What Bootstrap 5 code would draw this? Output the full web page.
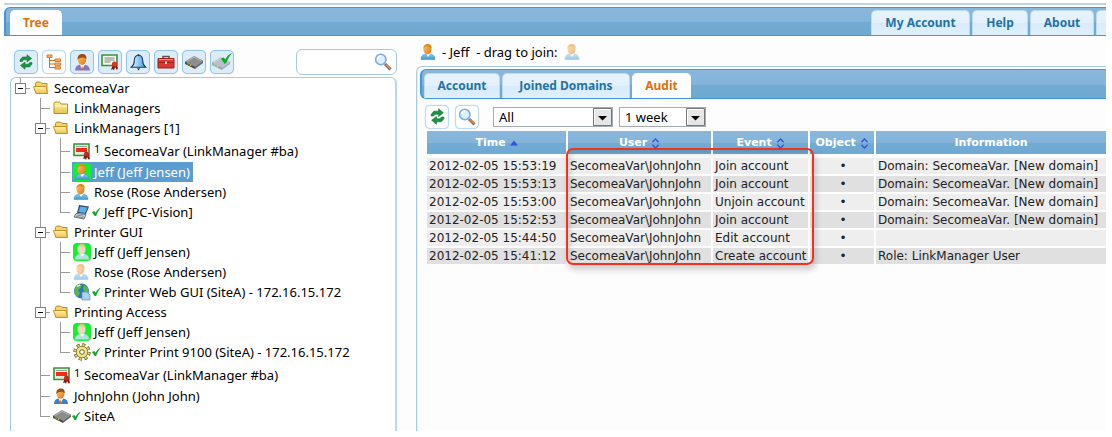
<!DOCTYPE html>
<html lang="en">
<head>
<meta charset="utf-8">
<meta name="viewport" content="width=device-width, initial-scale=1">
<title>GateManager</title>
<link href="https://cdn.jsdelivr.net/npm/bootstrap@5.3.0/dist/css/bootstrap.min.css" rel="stylesheet">
<style>
body{background:#fff;color:#000;font:13px/20px "Noto Sans","Open Sans",sans-serif;padding:3px 6px 6px 4px}
.frame{background:#fdfdfd;border-top:2px solid #bfd5e7;padding-top:2px}
.tabbar{height:30px;border:1px solid #4297d7;border-right:0;border-left-width:2px;border-radius:6px 0 0 6px;background:linear-gradient(#8ab7dc 0,#84b4da 52%,#72aad3 53%,#6faad2 100%)}
.tabbar.main-bar{height:29px;border-radius:6px 0 0 0}
.tabbar a{display:flex;align-items:center;justify-content:center;height:25px;border:1px solid #b9dbf3;border-bottom:0;border-radius:5px 5px 0 0;background:linear-gradient(#e7f3fd 0,#e3f1fc 50%,#d8ebfa 51%,#dfeffc 100%);color:#2272a5;font-weight:700;font-size:12px;line-height:16px;text-decoration:none;white-space:nowrap}
.tabbar a.active{background:#fcfdfe;border-color:#fcfdfe;color:#e17009}
.topnav,.work .tabbar{gap:2px}
.w-tree{width:52px}
.w-account{width:99px}
.w-help{width:56px}
.w-about{width:64px}
.tabbar a.w-more{width:10px;border-right:0;border-radius:5px 0 0 0}
.w-acct{width:76px}
.w-joined{width:128px}
.w-audit{width:59px}
.side{width:393px;flex:none;padding-left:6px}
.toolbar{height:41px;padding:11px 0 0 4px}
.icobtn{width:24px;height:24px;padding:0;border:1px solid #92c7ea;border-radius:5px;background:#dcecf9;display:flex;align-items:center;justify-content:center;box-shadow:0 0 1px #a8d2ee}
.icobtn.plain{background:#fff;border-color:#b9dbf3}
.finder{width:101px;height:26px;border:1px solid #a6cbe6;border-radius:6px;background:#fff}
.finder input{border:0;outline:0;background:transparent;min-width:0;font-size:13px}
.treebox{border:1px solid #a6cbe6;border-bottom:0;border-right:2px solid #b9d7ec;border-radius:6px 6px 0 0;background:#fff}
.tree,.tree ul{list-style:none;margin:0;padding:0}
.tree ul{padding-left:20px}
.tree li{position:relative}
.tree ul>li::before{content:"";position:absolute;left:9px;top:0;bottom:0;width:1px;background:#9a9a9a}
.tree ul>li:last-child::before{bottom:auto;height:11px}
.node{display:flex;align-items:center;height:20px;padding-left:21px;position:relative;white-space:nowrap}
.lic>.node{height:24px;padding-top:2px}
.tree ul>li>.node::before{content:"";position:absolute;left:10px;top:10px;width:9px;height:1px;background:#9a9a9a}
.tree ul>li.lic>.node::before{top:13px}
.toggle{position:absolute;left:4px;top:5px;width:11px;height:11px;border:1px solid #808080;background:#fff;padding:0}
.toggle::before{content:"";position:absolute;left:2px;right:2px;top:4px;height:1px;background:#000}
.root>.node::before{content:"";position:absolute;left:15px;top:10px;width:4px;height:1px;background:#9a9a9a}
.root>.node::after{content:"";position:absolute;left:9px;top:0;width:1px;height:5px;background:#9a9a9a}
.node>a{display:flex;align-items:center;color:inherit;text-decoration:none;line-height:20px;height:20px;padding:0 3px 0 1px}
.node svg{flex:none}
.pic{width:21px;display:inline-flex;align-items:center}
.mini{width:10px;height:20px;font-size:11px;line-height:16px}
.tick{width:9px;margin-left:-2px;margin-right:3px}
.node>a.selected{background:#5b9dd0;color:#fff}
.online{background:#0cf42a;border-radius:4px}
.faded{opacity:.5}
.content{padding-left:19px;min-width:0}
.whoami{height:30px;padding:2px 0 0 4px;gap:6px}
.work{border:1px solid #a6cbe6;border-width:1px 0 0 1px;border-radius:6px 0 0 0;box-shadow:inset 1px 0 0 #e3f0f9;min-width:0;padding:2px 0 0 3px}
.work .tabbar{padding-left:2px}
.filters{gap:6px;padding:5px 0 0 5px;height:30px}
.pick{appearance:none;height:20px;border:1px solid #a5acb2;border-radius:0;padding:0 22px 0 5px;line-height:18px;color:#000;background:#fff url("data:image/svg+xml,%3Csvg xmlns='http://www.w3.org/2000/svg' width='19' height='18'%3E%3Cpath d='M.5.5h18v17H.5z' fill='%23e6e6e6' stroke='%23777'/%3E%3Cpath d='M1.500 16V1.500H17' fill='none' stroke='%23fff'/%3E%3Cpath d='M5 8h9L9.500 12.500z'/%3E%3C/svg%3E") no-repeat right center}
.type-pick{width:120px;margin-left:8px}
.span-pick{width:87px}
.logwrap{padding-left:5px;margin-right:-2px}
.log{width:100%;table-layout:fixed;border-collapse:separate;border-spacing:2px;font:12px/16px "DejaVu Sans",sans-serif;color:#222;margin:0}
.log th{height:23px;padding:0;text-align:center;font-size:11px;line-height:23px;color:#fff;background:linear-gradient(#8ab7dc 0,#84b4da 52%,#72aad3 53%,#6faad2 100%);white-space:nowrap}
.log td{height:16px;padding:0 0 0 2px;white-space:nowrap;overflow:hidden;background:#eee}
.log tbody tr:nth-child(odd) td{background:#e0e0e0}
.log tbody tr.gap-row td{height:0;background:none}
.c1{width:139px}
.c2{width:143px}
.c3{width:95px}
.c4{width:64px}
.callout{position:absolute;left:146px;top:19px;width:248px;height:117px;border:2px solid #ee3322;border-radius:7px;box-shadow:2px 5px 6px rgba(0,0,0,.18),inset 3px 4px 5px rgba(0,0,0,.12);pointer-events:none}
.page-wrap{overflow-x:hidden}
</style>
</head>
<body class="page-wrap d-flex flex-column min-vh-100">
<svg width="0" height="0" class="position-absolute" aria-hidden="true">
  <defs>
    <linearGradient id="gold" x2="0" y2="1"><stop stop-color="#fff3a8"/><stop offset="1" stop-color="#ecc24a"/></linearGradient>
    <linearGradient id="face" x2="1" y2="1"><stop stop-color="#ffc777"/><stop offset="1" stop-color="#d97708"/></linearGradient>
    <linearGradient id="coat" x2="0" y2="1"><stop stop-color="#8ccbee"/><stop offset="1" stop-color="#3b97cf"/></linearGradient>
    <linearGradient id="bellfill"><stop stop-color="#e8f6ff"/><stop offset="1" stop-color="#3d9be4"/></linearGradient>
  </defs>
  <symbol id="refresh" viewBox="0 0 16 16"><path d="M2 7.500V6l2.500-3H9V.7l4.500 3.800L9 8V5.800H5.500L4.300 7.500z" fill="#1b9544" stroke="#0c7430" stroke-width=".6"/><path d="M14 8.500V10l-2.500 3H7v2.300l-4.500-3.800L7 8v2.200h3.500l1.200-1.700z" fill="#1b9544" stroke="#0c7430" stroke-width=".6"/></symbol>
  <symbol id="hier" viewBox="0 0 16 16"><path d="M3.500 3v10.500H9M3.500 6.500H9M3.500 10H9" fill="none" stroke="#c9711c"/><g fill="#f9b367" stroke="#d77a22"><path d="M1 1h5v2.500H1z"/><path d="M9 5h5.500v2.500H9zM9 9h5.500v2.300H9zM9 12.800h5.500V15H9z"/></g></symbol>
  <symbol id="user" viewBox="0 0 16 16"><path d="M1 15.500c0-3 1.500-5 4-5.500h5.500c3 .5 4.500 2.500 4.500 5.500z" fill="url(#coat)" stroke="#3c8fc2" stroke-width=".5"/><path d="M6 9.500 8 13l2.500-3.500z" fill="#fff"/><ellipse cx="7.500" cy="5.500" rx="4" ry="5" fill="url(#face)"/><path d="M3.400 5C3.200 1.500 5.200 0 8 0c2.500 0 4 1.500 3.600 4.500C10 2.500 6 2.200 4.500 3z" fill="#dd8b16"/></symbol>
  <symbol id="away" viewBox="0 0 16 16"><path d="M1 15.500c0-3 1.500-5 4-5.500h5.500c3 .5 4.500 2.500 4.500 5.500z" fill="#b5e0dc" stroke="#8cc9b8" stroke-width=".5"/><path d="M6 9.500 8 13l2.500-3.500z" fill="#fff"/><ellipse cx="7.500" cy="5.500" rx="4" ry="5" fill="#ead9bd"/><path d="M3.400 5C3.200 1.500 5.200 0 8 0c2.500 0 4 1.500 3.600 4.500C10 2.500 6 2.200 4.500 3z" fill="#d6c49c"/></symbol>
  <symbol id="admin" viewBox="0 0 16 16"><path d="M1 15.500c0-3 1.500-5 4-5.500h5.500c3 .5 4.500 2.500 4.500 5.500z" fill="currentColor"/><path d="M5.500 9.500 7.500 15l3-5.500z" fill="#fff"/><path d="m7.500 11 1.500 4H6.500z" fill="#e06a2a"/><ellipse cx="7.500" cy="5.500" rx="3.900" ry="4.800" fill="url(#face)"/><path d="M3.400 5.500C3 1.500 5.200 0 8 0c2.700 0 4.200 2 3.600 5C10 2.700 6 2.500 3.400 5.500z" fill="#9a4c12"/></symbol>
  <symbol id="cert" viewBox="0 0 18 17"><path d="M1 1h15v10.500H1z" fill="#f5faf0" stroke="#37913f" stroke-width="1.600"/><path d="M3.500 4h10M3.500 6h10M3.500 8h6" stroke="#78857a"/><path d="m12 10-2 6 2-1 1 1.500 1-3.500 2 3 1-2-2-4z" fill="#7e1510"/><circle cx="13.500" cy="10" r="2.600" fill="#e33224"/></symbol>
  <symbol id="license" viewBox="0 0 18 17"><path d="M1 1h15v11.500H1z" fill="#e3efdc" stroke="#37913f" stroke-width="1.600"/><path d="M3 5h11v4H3z" fill="#f5291a"/><path d="M3 3.500h11" stroke="#9aab98"/><path d="m12 11-2 5 2-.5 1 1.500 1-3 2 3 1-2-2-4z" fill="#7e1510"/><circle cx="13.500" cy="11" r="2.500" fill="#c9281c"/></symbol>
  <symbol id="bell" viewBox="0 0 16 16"><path d="M8 1c-3 .5-4 2.500-4 5.500 0 3-1 4.500-2.800 6h13.600C13 11 12 9.500 12 6.500 12 3.500 11 1.500 8 1z" fill="url(#bellfill)" stroke="#173a63"/><path d="M6.500 13.500h3L8 15.500z" fill="#173a63"/><circle cx="8" cy="1.200" r="1" fill="#173a63"/></symbol>
  <symbol id="toolbox" viewBox="0 0 18 16"><path d="M6 5V2.500h6V5" fill="none" stroke="#555" stroke-width="1.500"/><path d="M1 4.500h16V14H1z" fill="#d83a32" stroke="#a51d17"/><path d="M1 8h16v1H1z" fill="#a8211b"/><path d="M2 5.500h14" stroke="#f29a90"/><path d="M8 7.500h2V10H8z" fill="#ddd"/></symbol>
  <symbol id="gate" viewBox="0 0 18 16"><path d="M0 7.500 9 2l9 4.500-8 6z" fill="#8d8d8d"/><path d="M0 7.500V10l10 5v-2.500z" fill="#4b4b4b"/><path d="m18 6.500-8 6V15l8-6z" fill="#6b6b6b"/><path d="M2 7.500 9 3.200l7 3.500" fill="none" stroke="#b5b5b5"/><circle cx="3" cy="9.800" r=".9" fill="#3dce45"/><circle cx="5.500" cy="11" r=".9" fill="#f3a81b"/></symbol>
  <symbol id="check" viewBox="0 0 10 10"><path d="M0 5 2.500 4 4 5.800C5 3.500 7 1.200 10 0 7.500 3 5.800 6 4.600 9.500H3z" fill="#10a52b"/></symbol>
  <symbol id="lens" viewBox="0 0 18 18"><path d="m11 11 5.500 5.500" stroke="#6a6a8a" stroke-width="3"/><path d="m12 11.500 4.500 4" stroke="#e08a3c" stroke-width="2"/><circle cx="6.800" cy="6.500" r="5.200" fill="#dcf0ff" stroke="#7daee0" stroke-width="1.600"/><path d="M3.500 6A3.500 3.500 0 0 1 7 3" fill="none" stroke="#fff" stroke-width="1.300"/></symbol>
  <symbol id="folder" viewBox="0 0 16 16"><path d="M1 13.500v-10L2 2h4.500L8 4h6.500v9.500z" fill="url(#gold)" stroke="#b98f26"/><path d="M1.500 6H14" stroke="#fffbd8"/></symbol>
  <symbol id="folder-open" viewBox="0 0 16 16"><path d="M2.500 13V3.500L3.500 2h4L9 3.500h5V13z" fill="#f3d36c" stroke="#b98f26"/><path d="M.5 6.500H13L14.500 13.500H3z" fill="url(#gold)" stroke="#c09428"/></symbol>
  <symbol id="laptop" viewBox="0 0 17 16"><path d="m6 1 10 1.500L13 10 4 9z" fill="#2e4b68"/><path d="m7 2.500 7.500 1L12.200 9 5.500 8z" fill="#58aef0"/><path d="m3 9.500 10 1-2 4.500-10-2z" fill="#d7dce2" stroke="#67717b"/><path d="m3.500 11 7.500 1.200M3 12.500l7.500 1.300" stroke="#68737e" stroke-width=".8"/></symbol>
  <symbol id="globe" viewBox="0 0 18 18"><circle cx="8.500" cy="8" r="7.500" fill="#2f76b5"/><path d="M2 4.500C5 .5 8 1 9 2L7.500 5 5 7l2 3-2 4C2 12 .8 8 2 4.500zM11 2l4 3 .5 4-4 .5-1.500-4z" fill="#5cb747"/><path d="M4 3.500 7 2" stroke="#d8f4df" stroke-width="1.500"/><path d="M9 9h5l3 3v5H9z" fill="#a8d4f0" stroke="#5f91b9" stroke-width=".7"/></symbol>
  <symbol id="gear" viewBox="0 0 18 18"><circle cx="9" cy="9" r="7" fill="none" stroke="#5c5216" stroke-width="3.400" stroke-dasharray="3 2.498"/><circle cx="9" cy="9" r="5.800" fill="#efe48a" stroke="#6f6522" stroke-width=".8"/><circle cx="9" cy="9" r="7" fill="none" stroke="#e6da7c" stroke-width="2" stroke-dasharray="2 3.498" stroke-dashoffset="-.5"/><circle cx="9" cy="9" r="2.300" fill="#fff" stroke="#6f6522"/></symbol>
  <symbol id="sort" viewBox="0 0 10 12"><path d="M1.500 4.500 5 1l3.500 3.500M1.500 7.500 5 11l3.500-3.500" fill="none" stroke="#3251e6" stroke-width="1.500"/></symbol>
</svg>

<div class="frame flex-grow-1 d-flex flex-column">
  <nav class="tabbar main-bar d-flex align-items-end overflow-hidden">
    <a class="w-tree active ms-1" href="#" aria-current="page">Tree</a>
    <div class="d-flex ms-auto topnav">
      <a href="#" class="w-account">My Account</a><a href="#" class="w-help">Help</a><a href="#" class="w-about">About</a><a href="#" class="w-more" aria-label="More"></a>
    </div>
  </nav>

  <div class="d-flex flex-grow-1">
    <aside class="side d-flex flex-column">
      <div class="d-flex align-items-center justify-content-between toolbar">
        <div class="d-flex gap-1">
          <button class="icobtn" type="button" aria-label="Refresh"><svg width="16" height="16"><use href="#refresh"/></svg></button>
          <button class="icobtn plain" type="button" aria-label="Tree view"><svg width="16" height="16"><use href="#hier"/></svg></button>
          <button class="icobtn" type="button" aria-label="Accounts"><svg width="17" height="17" color="#8a72c4"><use href="#admin"/></svg></button>
          <button class="icobtn" type="button" aria-label="Licenses"><svg width="18" height="17"><use href="#cert"/></svg></button>
          <button class="icobtn" type="button" aria-label="Alerts"><svg width="17" height="17"><use href="#bell"/></svg></button>
          <button class="icobtn" type="button" aria-label="Tools"><svg width="18" height="16"><use href="#toolbox"/></svg></button>
          <button class="icobtn" type="button" aria-label="Appliances"><svg width="18" height="16"><use href="#gate"/></svg></button>
          <button class="icobtn" type="button" aria-label="Online appliances"><svg width="20" height="18"><use href="#gate" y="2" width="18" height="16" opacity=".45"/><use href="#check" x="9" width="11" height="11"/></svg></button>
        </div>
        <div class="finder d-flex align-items-center pe-1"><input type="text" class="flex-grow-1 w-100" aria-label="Search tree"><svg width="18" height="18" class="flex-shrink-0"><use href="#lens"/></svg></div>
      </div>
      <div class="treebox flex-grow-1">
        <ul class="tree">
          <li class="root"><div class="node"><button class="toggle" type="button" aria-label="Collapse"></button><a href="#"><span class="pic"><svg width="16" height="16"><use href="#folder-open"/></svg></span>SecomeaVar</a></div>
            <ul>
              <li><div class="node"><a href="#"><span class="pic"><svg width="16" height="16"><use href="#folder"/></svg></span>LinkManagers</a></div></li>
              <li><div class="node"><button class="toggle" type="button" aria-label="Collapse"></button><a href="#"><span class="pic"><svg width="16" height="16"><use href="#folder-open"/></svg></span>LinkManagers [1]</a></div>
                <ul>
                  <li class="lic"><div class="node"><a href="#"><span class="pic"><svg width="18" height="17"><use href="#license"/></svg></span><span class="mini">1</span>SecomeaVar (LinkManager #ba)</a></div></li>
                  <li><div class="node"><a href="#" class="selected"><span class="pic"><svg class="online" width="18" height="18"><use href="#user" x="1" y="1" width="16" height="16"/></svg></span>Jeff (Jeff Jensen)</a></div></li>
                  <li><div class="node"><a href="#"><span class="pic"><svg width="16" height="16"><use href="#user"/></svg></span>Rose (Rose Andersen)</a></div></li>
                  <li><div class="node"><a href="#"><span class="pic"><svg width="17" height="16"><use href="#laptop"/></svg></span><svg class="tick" height="10"><use href="#check"/></svg>Jeff [PC-Vision]</a></div></li>
                </ul>
              </li>
              <li><div class="node"><button class="toggle" type="button" aria-label="Collapse"></button><a href="#"><span class="pic"><svg width="16" height="16"><use href="#folder-open"/></svg></span>Printer GUI</a></div>
                <ul>
                  <li><div class="node"><a href="#"><span class="pic"><svg class="online" width="18" height="18"><use href="#away" x="1" y="1" width="16" height="16"/></svg></span>Jeff (Jeff Jensen)</a></div></li>
                  <li><div class="node"><a href="#"><span class="pic"><svg class="faded" width="16" height="16"><use href="#user"/></svg></span>Rose (Rose Andersen)</a></div></li>
                  <li><div class="node"><a href="#"><span class="pic"><svg width="18" height="18"><use href="#globe"/></svg></span><svg class="tick" height="10"><use href="#check"/></svg>Printer Web GUI (SiteA) - 172.16.15.172</a></div></li>
                </ul>
              </li>
              <li><div class="node"><button class="toggle" type="button" aria-label="Collapse"></button><a href="#"><span class="pic"><svg width="16" height="16"><use href="#folder-open"/></svg></span>Printing Access</a></div>
                <ul>
                  <li><div class="node"><a href="#"><span class="pic"><svg class="online" width="18" height="18"><use href="#away" x="1" y="1" width="16" height="16"/></svg></span>Jeff (Jeff Jensen)</a></div></li>
                  <li><div class="node"><a href="#"><span class="pic"><svg width="18" height="18"><use href="#gear"/></svg></span><svg class="tick" height="10"><use href="#check"/></svg>Printer Print 9100 (SiteA) - 172.16.15.172</a></div></li>
                </ul>
              </li>
              <li class="lic"><div class="node"><a href="#"><span class="pic"><svg width="18" height="17"><use href="#license"/></svg></span><span class="mini">1</span>SecomeaVar (LinkManager #ba)</a></div></li>
              <li><div class="node"><a href="#"><span class="pic"><svg width="16" height="17" color="#3f7fc4"><use href="#admin"/></svg></span>JohnJohn (John John)</a></div></li>
              <li><div class="node"><a href="#"><span class="pic"><svg width="18" height="16"><use href="#gate"/></svg></span><svg class="tick" height="10"><use href="#check"/></svg>SiteA</a></div></li>
            </ul>
          </li>
        </ul>
      </div>
    </aside>

    <main class="flex-grow-1 d-flex flex-column content">
      <div class="d-flex align-items-center whoami"><svg width="16" height="18"><use href="#user"/></svg><span>- Jeff &nbsp;- drag to join:</span><svg class="faded" width="16" height="18"><use href="#user"/></svg></div>
      <section class="work flex-grow-1">
        <nav class="tabbar d-flex align-items-end">
          <a href="#" class="w-acct">Account</a><a href="#" class="w-joined">Joined Domains</a><a href="#" class="w-audit active" aria-current="page">Audit</a>
        </nav>
        <form class="d-flex align-items-center filters">
          <button class="icobtn plain" type="button" aria-label="Refresh log"><svg width="17" height="17"><use href="#refresh"/></svg></button>
          <button class="icobtn plain" type="button" aria-label="Search log"><svg width="18" height="18"><use href="#lens"/></svg></button>
          <select class="pick type-pick" aria-label="Event type"><option>All</option></select>
          <select class="pick span-pick" aria-label="Period"><option>1 week</option></select>
        </form>
        <div class="position-relative logwrap">
          <table class="log">
            <colgroup><col class="c1"><col class="c2"><col class="c3"><col class="c4"><col></colgroup>
            <thead><tr><th>Time <svg width="8" height="6"><path d="M0 5.500h8L4 .5z" fill="#3251e6"/></svg></th><th>User <svg width="9" height="11"><use href="#sort"/></svg></th><th>Event <svg width="9" height="11"><use href="#sort"/></svg></th><th>Object <svg width="9" height="11"><use href="#sort"/></svg></th><th>Information</th></tr></thead>
            <tbody>
              <tr class="gap-row" aria-hidden="true"><td colspan="5"></td></tr>
              <tr><td>2012-02-05 15:53:19</td><td>SecomeaVar\JohnJohn</td><td>Join account</td><td class="text-center">•</td><td>Domain: SecomeaVar. [New domain]</td></tr>
              <tr><td>2012-02-05 15:53:13</td><td>SecomeaVar\JohnJohn</td><td>Join account</td><td class="text-center">•</td><td>Domain: SecomeaVar. [New domain]</td></tr>
              <tr><td>2012-02-05 15:53:00</td><td>SecomeaVar\JohnJohn</td><td>Unjoin account</td><td class="text-center">•</td><td>Domain: SecomeaVar. [New domain]</td></tr>
              <tr><td>2012-02-05 15:52:53</td><td>SecomeaVar\JohnJohn</td><td>Join account</td><td class="text-center">•</td><td>Domain: SecomeaVar. [New domain]</td></tr>
              <tr><td>2012-02-05 15:44:50</td><td>SecomeaVar\JohnJohn</td><td>Edit account</td><td class="text-center">•</td><td></td></tr>
              <tr><td>2012-02-05 15:41:12</td><td>SecomeaVar\JohnJohn</td><td>Create account</td><td class="text-center">•</td><td>Role: LinkManager User</td></tr>
            </tbody>
          </table>
          <div class="callout"></div>
        </div>
      </section>
    </main>
  </div>
</div>
<script src="https://cdn.jsdelivr.net/npm/bootstrap@5.3.0/dist/js/bootstrap.bundle.min.js"></script>
</body>
</html>
